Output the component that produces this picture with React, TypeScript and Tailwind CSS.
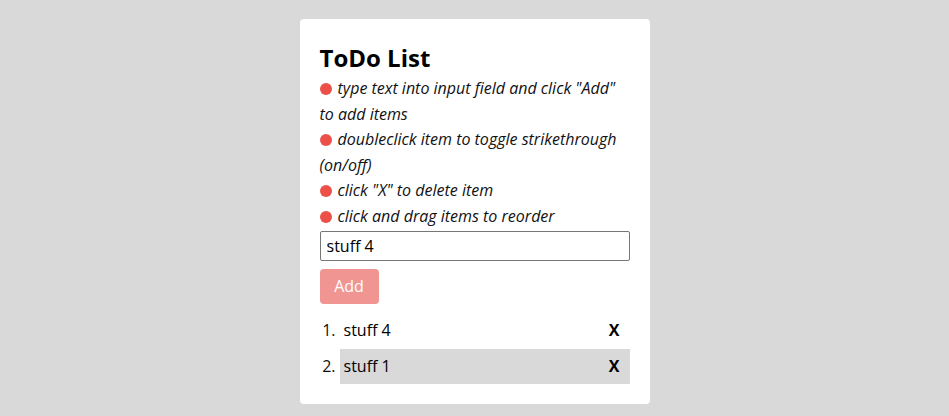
import React, { useState } from "react";

interface Item {
  id: number;
  text: string;
  done: boolean;
}

const hints = [
  'type text into input field and click "Add" to add items',
  "doubleclick item to toggle strikethrough (on/off)",
  'click "X" to delete item',
  "click and drag items to reorder",
];

export default function App() {
  const [value, setValue] = useState("stuff 4");
  const [items, setItems] = useState<Item[]>([
    { id: 4, text: "stuff 4", done: false },
    { id: 1, text: "stuff 1", done: false },
  ]);
  // second row shows the hover/drag highlight in the screenshot
  const [active] = useState(1);

  const addItem = () => {
    if (!value.trim()) return;
    setItems((prev) => [{ id: Date.now(), text: value, done: false }, ...prev]);
    setValue("");
  };

  return (
    <div
      className="min-h-screen w-full bg-[#d9d9d9] flex justify-center pt-[19px]"
      style={{ fontFamily: '"Open Sans", "Noto Sans", sans-serif' }}
    >
      <div className="w-[350px] h-[385px] bg-white rounded-[4px] px-[20px] pt-[21px] pb-[20px] text-black">
        <h1 className="text-[24px] leading-[36px] font-bold">ToDo List</h1>

        <div className="text-[16px] leading-[25.6px] italic text-[#111]">
          {hints.map((h) => (
            <p key={h}>
              <span className="inline-block w-[12px] h-[12px] rounded-full bg-[#ec5049] mr-[6px] align-[-1px]" />
              {h}
            </p>
          ))}
        </div>

        <input
          value={value}
          onChange={(e) => setValue(e.target.value)}
          className="mt-[1px] block w-full h-[30px] border border-[#767676] rounded-[2px] px-[6px] text-[16px] text-black outline-none"
        />

        <button
          onClick={addItem}
          className="mt-[8px] w-[59px] h-[35px] rounded-[4px] bg-[#f19592] text-white text-[16px] flex items-center justify-center"
        >
          Add
        </button>

        <ol className="mt-[9px] text-[16px]">
          {items.map((item, i) => (
            <li key={item.id} className="flex items-center h-[35px] mb-[1px]">
              <span className="w-[16px] text-right shrink-0 text-[#111]">{i + 1}.</span>
              <div
                className={`ml-[4px] flex-1 h-full flex items-center justify-between pl-[4px] pr-[10px] ${
                  i === active ? "bg-[#d9d9d9]" : ""
                }`}
                onDoubleClick={() =>
                  setItems((prev) => prev.map((it) => (it.id === item.id ? { ...it, done: !it.done } : it)))
                }
              >
                <span className={item.done ? "line-through" : ""}>{item.text}</span>
                <button
                  onClick={() => setItems((prev) => prev.filter((it) => it.id !== item.id))}
                  className="font-bold text-[16px] leading-none"
                >
                  X
                </button>
              </div>
            </li>
          ))}
        </ol>
      </div>
    </div>
  );
}
